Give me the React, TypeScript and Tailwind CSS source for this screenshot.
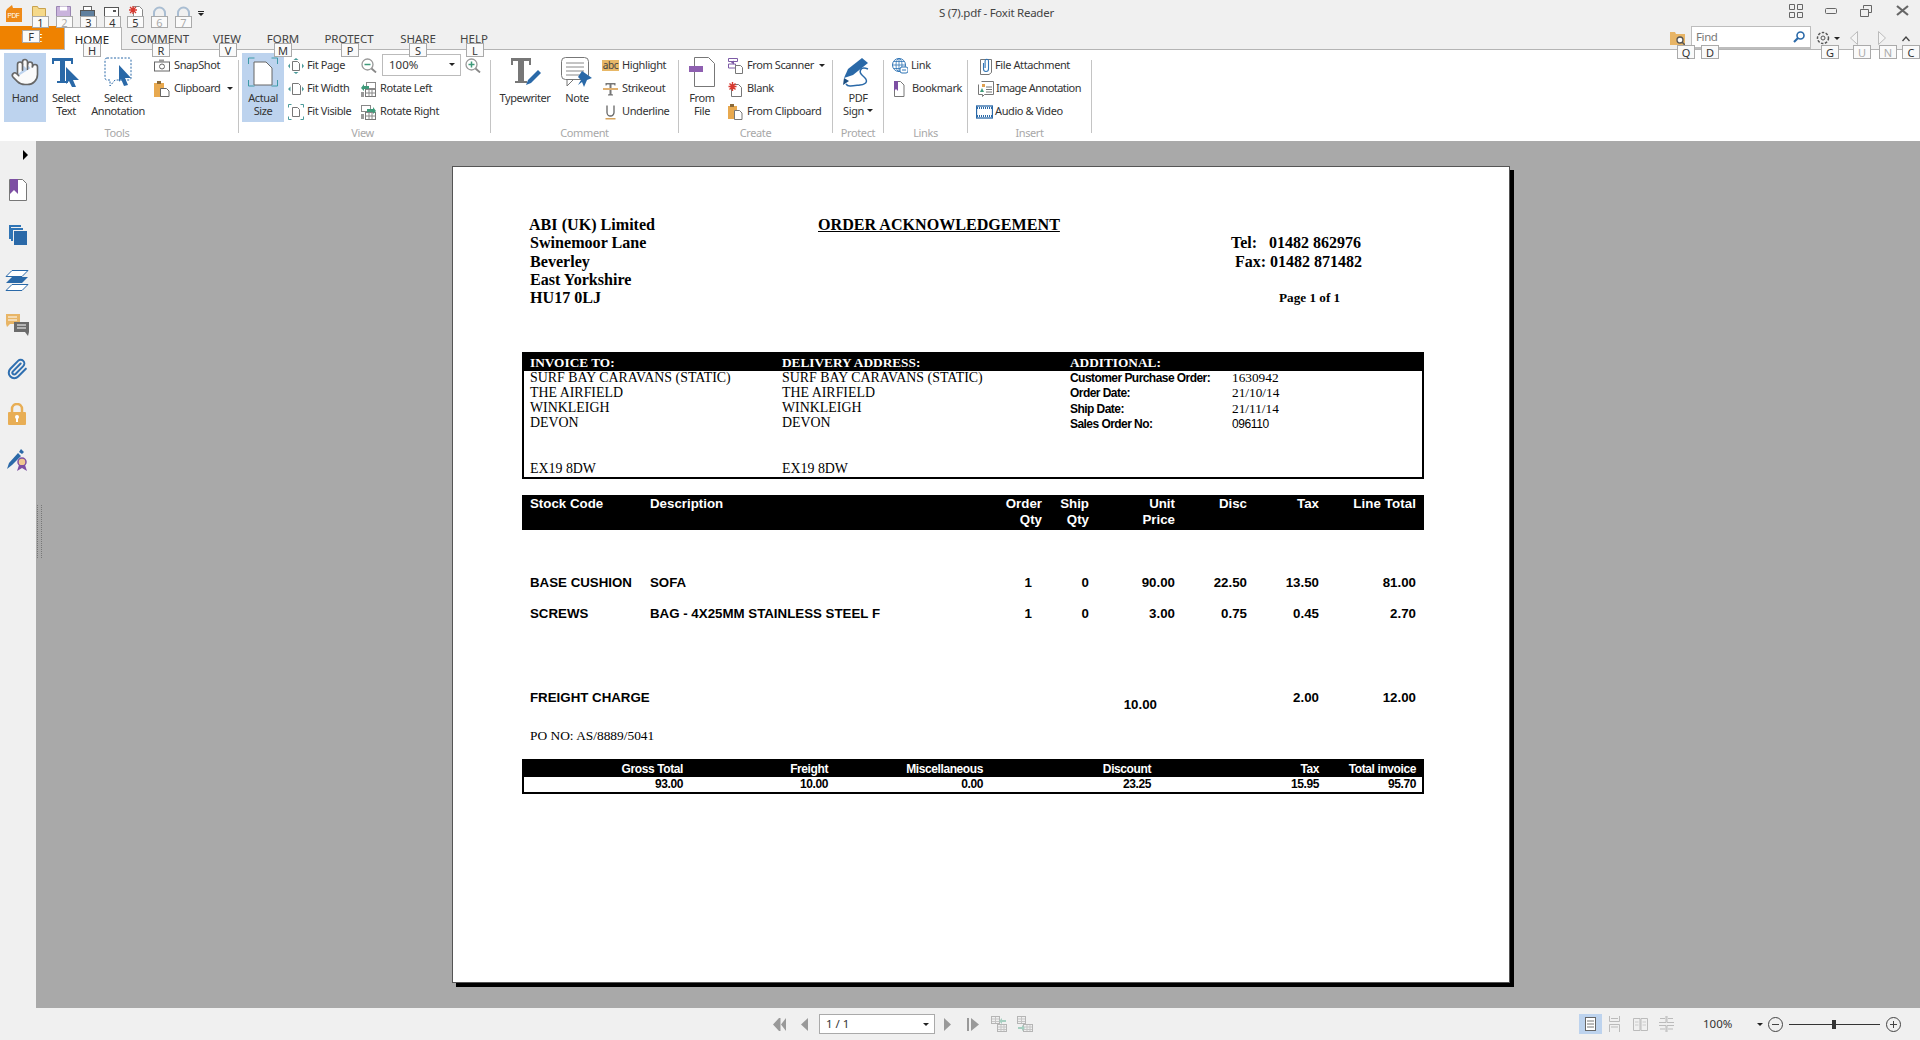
import React from "react";
import { Hand, Paperclip } from "lucide-react";

const BL = "#2a69a8";
const keys: [string, string, boolean][] = [
  ["1", "left-[32px] top-[16px] w-[17px] h-[12px]", false],
  ["2", "left-[56px] top-[16px] w-[17px] h-[12px]", true],
  ["3", "left-[80px] top-[16px] w-[17px] h-[12px]", false],
  ["4", "left-[104px] top-[16px] w-[17px] h-[12px]", false],
  ["5", "left-[127px] top-[16px] w-[17px] h-[12px]", false],
  ["6", "left-[151px] top-[16px] w-[17px] h-[12px]", true],
  ["7", "left-[175px] top-[16px] w-[17px] h-[12px]", true],
  ["F", "left-[22px] top-[30px] w-[18px] h-[13px]", false],
  ["H", "left-[83px] top-[43px] w-[18px] h-[14px]", false],
  ["R", "left-[152px] top-[43px] w-[18px] h-[14px]", false],
  ["V", "left-[219px] top-[43px] w-[18px] h-[14px]", false],
  ["M", "left-[274px] top-[43px] w-[18px] h-[14px]", false],
  ["P", "left-[341px] top-[43px] w-[18px] h-[14px]", false],
  ["S", "left-[409px] top-[43px] w-[18px] h-[14px]", false],
  ["L", "left-[466px] top-[43px] w-[18px] h-[14px]", false],
  ["Q", "left-[1677px] top-[45px] w-[18px] h-[14px]", false],
  ["D", "left-[1701px] top-[45px] w-[18px] h-[14px]", false],
  ["G", "left-[1821px] top-[45px] w-[18px] h-[14px]", false],
  ["U", "left-[1853px] top-[45px] w-[18px] h-[14px]", true],
  ["N", "left-[1879px] top-[45px] w-[18px] h-[14px]", true],
  ["C", "left-[1902px] top-[45px] w-[18px] h-[14px]", false],
];

function S({ w, h, children, className = "" }: { w: number; h: number; children: React.ReactNode; className?: string }) {
  return (
    <svg width={w} height={h} viewBox={`0 0 ${w} ${h}`} className={"shrink-0 " + className}>
      {children}
    </svg>
  );
}

const Caret = ({ className = "" }: { className?: string }) => (
  <span className={"inline-block w-0 h-0 border-x-[3px] border-x-transparent border-t-[3px] border-t-[#222] " + className} />
);

const TableIcon = ({ className = "", flip = false }: { className?: string; flip?: boolean }) => (
  <S w={16} h={16} className={className}>
    <rect x=".5" y=".5" width="8" height="7" fill="#f0f0f0" stroke="#b5b5b5" />
    <path d="M1 3h7M1 5.500h7M4.500 1v6" stroke="#c5c5c5" />
    <rect x="6.500" y="8.500" width="9" height="7" fill="#f0f0f0" stroke="#b5b5b5" />
    <path d="M7 11h8M7 13.500h8M10 9v6M13 9v6" stroke="#c5c5c5" />
    <path d={flip ? "M1 11h4v-2l3 3-3 3v-2h-4z" : "M15 4h-4v-2l-3 3 3 3v-2h4z"} fill="#a5cfc0" />
  </S>
);

const icons: Record<string, React.ReactNode> = {
  snapshot: (
    <S w={16} h={13}>
      <rect x=".5" y="3" width="15" height="9" fill="#fff" stroke="#666" />
      <rect x="5" y=".5" width="5" height="2.500" fill="#999" />
      <circle cx="8" cy="7.500" r="2.500" fill="none" stroke="#666" />
    </S>
  ),
  clipboard: (
    <S w={16} h={16}>
      <rect x="0" y="2" width="10" height="14" fill="#e8a94f" />
      <rect x="3" y="0" width="4" height="3" fill="#8a6a3a" />
      <path d="M6.500 7.500h6l2.500 2.500v5.500h-8.500z" fill="#fff" stroke="#666" />
    </S>
  ),
  fitpage: (
    <S w={16} h={16}>
      <path d="M4.500 3.500h5l2 2v7h-7z" fill="#fff" stroke="#777" />
      <path d="M8 0l2.500 2h-5zM8 16l2.500-2h-5zM0 8l2-2.500v5zM16 8l-2-2.500v5z" fill="#4a9a9a" />
    </S>
  ),
  fitwidth: (
    <S w={16} h={16}>
      <path d="M4.500 2.500h6l2 2v9h-8z" fill="#fff" stroke="#777" />
      <path d="M0 8l2.500-2.500v5zM16 8l-2-2.500v5z" fill="#4a9a9a" />
    </S>
  ),
  fitvisible: (
    <S w={16} h={16}>
      <path d="M4.500 3.500h5l2 2v7h-7z" fill="#fff" stroke="#777" />
      <path d="M.5 3.500v-3h3M12.500.5h3v3M.5 12.500v3h3M12.500 15.500h3v-3" fill="none" stroke="#4a9a9a" />
    </S>
  ),
  rotl: (
    <S w={15} h={16}>
      <rect x="5.500" y="1.500" width="9" height="6" fill="#fff" stroke="#888" />
      <rect x="4.500" y="8.500" width="10" height="7" fill="#fff" stroke="#777" />
      <path d="M5 8.500h9.500M8 8.500v7M11 8.500v7M4.500 12h10" stroke="#888" fill="none" />
      <path d="M0 7l3-4v2h5v3h-5v2z" fill="#3f9a7a" />
      <rect x="0" y="11" width="3" height="5" fill="#999" />
    </S>
  ),
  rotr: (
    <S w={15} h={16}>
      <rect x=".5" y="1.500" width="9" height="6" fill="#fff" stroke="#888" />
      <rect x="4.500" y="8.500" width="10" height="7" fill="#fff" stroke="#777" />
      <path d="M5 8.500h9.500M8 8.500v7M11 8.500v7M4.500 12h10" stroke="#888" fill="none" />
      <path d="M15 7l-3-4v2h-6v3h6v2z" fill="#3f9a7a" />
      <rect x="0" y="10" width="3" height="5" fill="#999" />
    </S>
  ),
  strike: (
    <S w={17} h={14}>
      <path d="M3.500 1h10v2.500h-1l-.5-1h-2.500v9.500l1.500.5v1h-5v-1l1.500-.5v-9.500h-2.500l-.5 1h-1z" fill="#777" />
      <rect x="1" y="6" width="15" height="2" fill="#e0b070" />
    </S>
  ),
  underline: (
    <S w={17} h={16}>
      <path d="M5 1.500v7a3.500 3.500 0 0 0 7 0v-7" stroke="#666" strokeWidth="1.300" fill="none" />
      <rect x="3.500" y="14" width="10" height="1.500" fill="#d7a45c" />
    </S>
  ),
  scanner: (
    <S w={15} h={16}>
      <path d="M.5 .5h9v3h-9zM.5 6h7v4h-7z" fill="#fff" stroke="#7d5ba6" />
      <path d="M3 4.500l3-2v4z" fill="#7d5ba6" />
      <path d="M7.500 7.500h5l2 2v6h-7z" fill="#fff" stroke="#777" />
    </S>
  ),
  blank: (
    <S w={15} h={16}>
      <path d="M3.500 3.500h7l3 3v9h-10z" fill="#fff" stroke="#777" />
      <path d="M4.500 1v9M.5 5.500h8M1.500 2.500l6 6M7.500 2.500l-6 6" stroke="#d9392f" strokeWidth="1.400" />
    </S>
  ),
  fromclip: (
    <S w={15} h={16}>
      <rect x="0" y="2" width="9" height="13" fill="#e8a94f" />
      <rect x="2" y="0" width="4" height="3" fill="#8a6a3a" />
      <path d="M6.500 6.500h5l2.500 2.500v6.500h-7.500z" fill="#fff" stroke="#777" />
    </S>
  ),
  link: (
    <S w={16} h={16}>
      <circle cx="7" cy="7" r="6.500" fill="#fff" stroke="#2f74b5" />
      <path d="M.5 7h13M7 .5v13M2 3.500h10M2 10.500h10" stroke="#2f74b5" fill="none" strokeWidth=".8" />
      <ellipse cx="7" cy="7" rx="3" ry="6.500" fill="none" stroke="#2f74b5" strokeWidth=".8" />
      <rect x="8" y="9" width="8" height="6" rx="2" fill="#fff" stroke="#2f74b5" />
      <path d="M10 12h4" stroke="#2f74b5" />
    </S>
  ),
  bookmark: (
    <S w={12} h={16}>
      <path d="M1.500 .5h6l3.500 3.500v11.500h-9.500z" fill="#fff" stroke="#777" />
      <path d="M1 0h4v10l-2-2-2 2z" fill="#7d4fa3" />
    </S>
  ),
  attach: (
    <S w={14} h={18}>
      <path d="M1.500 2.500h11v13l-2.500 2h-8.500z" fill="#fff" stroke="#777" />
      <path d="M4.500 6v6a2.500 2.500 0 0 0 5 0v-8a1.700 1.700 0 0 0-3.400 0v7" fill="none" stroke="#2f74b5" strokeWidth="1.100" />
    </S>
  ),
  image: (
    <S w={16} h={16}>
      <path d="M.5 3.500v10h4v2l2-2h9v-13h-12" fill="#fff" stroke="#777" />
      <path d="M2 11l2-4 2 4z" fill="#3f9a7a" />
      <path d="M8 6h6M8 8.500h6M8 11h6" stroke="#777" />
      <rect x="4" y="3" width="3" height="3" fill="#e0a050" />
    </S>
  ),
  video: (
    <S w={17} h={14}>
      <rect x=".5" y="1" width="16" height="12" fill="#fff" stroke="#2a69a8" strokeWidth="1.300" />
      <path d="M1 3h15M1 11h15" stroke="#2a69a8" strokeWidth="2" strokeDasharray="1 1" />
    </S>
  ),
};

function Row({ icon, text, gap, caret }: { icon: React.ReactNode; text: string; gap: string; caret?: string }) {
  return (
    <div className={"h-[23px] flex items-center whitespace-nowrap " + gap}>
      {icon}
      <span>{text}</span>
      {caret && <Caret className={caret} />}
    </div>
  );
}

function Big({ w, icon, l1, l2, active, ml = "" }: { w: string; icon: React.ReactNode; l1: React.ReactNode; l2?: React.ReactNode; active?: boolean; ml?: string }) {
  return (
    <div className={`${w} ${ml} h-[69px] mt-[3px] shrink-0 flex flex-col items-center ${active ? "bg-[#bdd3ee]" : ""}`}>
      <div className="h-[38px] pt-[4px] flex justify-center">{icon}</div>
      <div className="leading-[13px] text-center whitespace-nowrap">{l1}</div>
      {l2 && <div className="leading-[13px] text-center whitespace-nowrap">{l2}</div>}
    </div>
  );
}

function Group({ w, label, children, labelClass = "" }: { w: string; label: string; children: React.ReactNode; labelClass?: string }) {
  return (
    <div className={`${w} shrink-0 flex flex-col`}>
      <div className="h-[76px] flex">{children}</div>
      <div className={"h-[14px] leading-[14px] text-center text-[#a8a8a8] " + labelClass}>{label}</div>
    </div>
  );
}

const Sep = () => <div className="w-px h-[73px] mt-[10px] bg-[#c4c4c4] shrink-0" />;

const Col = ({ className, children }: { className: string; children: React.ReactNode }) => (
  <div className={"pt-[4px] shrink-0 " + className}>{children}</div>
);

function TopBar() {
  return (
    <div className="h-[50px] bg-[#f0f0f0] flex flex-col shrink-0">
      <div className="h-[26px] flex items-start">
        <svg width="16" height="17" viewBox="0 0 16 17" className="ml-[6px] mt-[5px] shrink-0">
          <path d="M1 4l5-4 1 3h9v14h-16v-11z" fill="#ef8a17" />
          <text x="1.500" y="13" fontSize="6.500" fill="#fff" fontFamily="Liberation Sans">PDF</text>
        </svg>
        <div className="flex ml-[10px] mt-[6px] gap-[9px] w-[171px]">
          <S w={15} h={11}><path d="M.5 10.500v-10h5l1 2h7v8z" fill="#f5d98a" stroke="#c9a24e" /></S>
          <S w={15} h={11}><path d="M.5.5h14v10h-14z" fill="#c9b3dc" stroke="#9a86b3" /><rect x="4" y=".5" width="7" height="4" fill="#fff" /></S>
          <S w={15} h={11}><rect x="3.500" y=".5" width="8" height="4" fill="#fff" stroke="#666" /><rect x=".5" y="4.500" width="14" height="6" fill="#60809f" stroke="#555" /></S>
          <S w={15} h={11}><rect x=".5" y="1.500" width="14" height="9" fill="#fff" stroke="#555" /><rect x="9" y="4" width="3" height="2" fill="#555" /></S>
          <S w={15} h={11}><path d="M5.500.5h6l3 3v7h-9z" fill="#fff" stroke="#888" /><path d="M5 0v8M1 4h8M2 1l6 6M8 1l-6 6" stroke="#d9392f" strokeWidth="1.300" /></S>
          <S w={15} h={11}><path d="M2 11v-4a5.500 5.500 0 0 1 11 0v4" fill="none" stroke="#a9bdd2" strokeWidth="2" /></S>
          <S w={15} h={11}><path d="M2 11v-4a5.500 5.500 0 0 1 11 0v4" fill="none" stroke="#a9bdd2" strokeWidth="2" /></S>
        </div>
        <svg width="7" height="6" viewBox="0 0 7 6" className="mt-[11px] -ml-[5px] shrink-0"><path d="M0 0h6v1h-6zM0 2h6l-3 3z" fill="#222" /></svg>
        <span className="ml-[734px] mt-[5px] leading-[16px] text-[11.5px] tracking-[-0.250px] text-[#444] whitespace-nowrap">S (7).pdf - Foxit Reader</span>
        <div className="ml-auto flex items-start">
          <S w={14} h={14} className="mt-[4px]"><path d="M.5.5h5v5h-5zM8.500.5h5v5h-5zM.5 8.500h5v5h-5zM8.500 8.500h5v5h-5z" fill="none" stroke="#666" /></S>
          <S w={12} h={6} className="mt-[8px] ml-[22px]"><rect x=".5" y=".5" width="11" height="5" rx="1" fill="none" stroke="#666" /></S>
          <S w={12} h={12} className="mt-[5px] ml-[23px]"><path d="M3.500 3.500v-3h8v7h-3M.5 4.500h8v7h-8z" fill="none" stroke="#666" /></S>
          <S w={13} h={11} className="mt-[5px] ml-[24px] mr-[11px]"><path d="M1 1l11 9M12 1l-11 9" stroke="#666" strokeWidth="2.200" /></S>
        </div>
      </div>
      <div className="h-[24px] flex items-start border-b border-[#b4b4b4] relative">
        <div className="w-[64px] h-[23px] bg-[#ef8200] text-white text-center leading-[23px] tracking-normal">FILE</div>
        <div className="w-[58px] h-[23px] -mb-px mt-[1px] bg-white border-x border-t border-[#b4b4b4] text-center leading-[24px] pr-[2px] text-[#222] text-[11.5px] tracking-normal">HOME</div>
        <div className="flex text-[11.5px] tracking-normal text-[#444] leading-[26px] text-center">
          <div className="w-[76px]">COMMENT</div>
          <div className="w-[58px]">VIEW</div>
          <div className="w-[54px]">FORM</div>
          <div className="w-[78px]">PROTECT</div>
          <div className="w-[60px]">SHARE</div>
          <div className="w-[52px]">HELP</div>
        </div>
        <div className="ml-auto flex items-start">
          <S w={15} h={14} className="mt-[5px]"><path d="M0 14v-13h5l1 2h9v11z" fill="#e8b566" /><circle cx="10" cy="9" r="3" fill="#fff" stroke="#555" strokeWidth="1.300" /><path d="M12 11l3 3" stroke="#555" strokeWidth="1.500" /></S>
          <div className="ml-[6px] w-[120px] h-[23px] bg-white border border-b-2 border-[#bdbdbd] flex items-center pl-[4px] text-[#777] text-[11.500px] justify-between pr-[5px]">
            <span>Find</span>
            <S w={12} h={12}><circle cx="7.500" cy="4.500" r="3.500" fill="none" stroke={BL} strokeWidth="1.600" /><path d="M5 7l-4 4" stroke={BL} strokeWidth="2.200" /></S>
          </div>
          <S w={14} h={14} className="mt-[5px] ml-[5px]"><circle cx="7" cy="7" r="2" fill="none" stroke="#555" /><circle cx="7" cy="7" r="5.500" fill="none" stroke="#555" strokeDasharray="2.500 1.500" strokeWidth="1.500" /></S>
          <Caret className="mt-[11px] ml-[4px]" />
          <S w={8} h={14} className="mt-[5px] ml-[10px]"><path d="M7.500.5v13l-7-6.500z" fill="#f5f5f5" stroke="#bbb" /></S>
          <S w={8} h={14} className="mt-[5px] ml-[20px]"><path d="M.5.5v13l7-6.500z" fill="#f5f5f5" stroke="#bbb" /></S>
          <S w={8} h={6} className="mt-[10px] ml-[16px] mr-[10px]"><path d="M.5 5l3.500-4 3.500 4" fill="none" stroke="#444" strokeWidth="1.300" /></S>
        </div>
      </div>
    </div>
  );
}

function Ribbon() {
  return (
    <div className="h-[91px] bg-white flex shrink-0">
      <Group w="w-[238px]" label="Tools" labelClass="pr-[4px]">
        <Big w="w-[42px]" ml="ml-[4px]" active icon={<Hand size={30} strokeWidth={1.300} color="#666" fill="#fafafa" />} l1="Hand" />
        <Big w="w-[40px]" icon={<S w={30} h={30}>
          <rect x="1" y="1" width="21" height="3" fill={BL} /><rect x="1" y="1" width="2" height="6" fill={BL} /><rect x="20" y="1" width="2" height="6" fill={BL} /><rect x="9" y="1" width="5" height="24" fill={BL} /><rect x="6" y="24" width="11" height="2" fill={BL} />
          <path d="M15 10l13 13h-6l3 7-4 0-3-6-3 3z" fill={BL} />
        </S>} l1="Select" l2="Text" />
        <Big w="w-[52px]" ml="ml-[6px]" icon={<S w={28} h={30}>
          <path d="M3 1h22a2 2 0 0 1 2 2v18a2 2 0 0 1-2 2h-14l-5 6v-6h-3a2 2 0 0 1-2-2v-18a2 2 0 0 1 2-2z" fill="none" stroke={BL} strokeDasharray="2 1.500" />
          <path d="M15 8l12 13h-6l3 7-4 1-3-7-2 3z" fill={BL} />
        </S>} l1="Select" l2="Annotation" />
        <Col className="ml-[10px]">
          <Row gap="gap-[4px]" icon={icons.snapshot} text="SnapShot" />
          <Row gap="gap-[4px]" icon={icons.clipboard} text="Clipboard" caret="ml-[3px]" />
        </Col>
      </Group>
      <Sep />
      <Group w="w-[251px]" label="View" labelClass="pr-[4px]">
        <Big w="w-[42px]" ml="ml-[3px]" active icon={<S w={30} h={30}>
          <path d="M6 5h12l6 6v17h-18z" fill="#fff" stroke="#666" />
          <path d="M.5 7v-6h6M23.500 1h6v6M.5 23v6h6M29.500 23v6h-6" fill="none" stroke="#3f9aa8" />
        </S>} l1="Actual" l2="Size" />
        <Col className="ml-[4px] w-[73px]">
          <Row gap="gap-[3px]" icon={icons.fitpage} text="Fit Page" />
          <Row gap="gap-[3px]" icon={icons.fitwidth} text="Fit Width" />
          <Row gap="gap-[3px]" icon={icons.fitvisible} text="Fit Visible" />
        </Col>
        <Col className="w-[122px]">
          <div className="h-[23px] flex items-center">
            <S w={16} h={15}><circle cx="6.500" cy="6.500" r="5.500" fill="#fff" stroke="#999" strokeWidth="1.300" /><path d="M3.500 6.500h6" stroke="#3f9a7a" strokeWidth="1.500" /><path d="M10.500 10.500l4.500 4" stroke="#888" strokeWidth="1.800" /></S>
            <div className="ml-[5px] w-[79px] h-[22px] -mt-[2px] border border-[#bbb] flex items-center justify-between pl-[6px] pr-[5px] text-[11.5px] tracking-normal">
              <span>100%</span><Caret />
            </div>
            <S w={16} h={15} className="ml-[4px]"><circle cx="6.500" cy="6.500" r="5.500" fill="#fff" stroke="#999" strokeWidth="1.300" /><path d="M3.500 6.500h6M6.500 3.500v6" stroke="#3f9a7a" strokeWidth="1.500" /><path d="M10.500 10.500l4.500 4" stroke="#888" strokeWidth="1.800" /></S>
          </div>
          <Row gap="gap-[4px]" icon={icons.rotl} text="Rotate Left" />
          <Row gap="gap-[4px]" icon={icons.rotr} text="Rotate Right" />
        </Col>
      </Group>
      <Sep />
      <Group w="w-[187px]" label="Comment">
        <Big w="w-[52px]" ml="ml-[8px]" icon={<S w={32} h={30}>
          <rect x="2" y="1" width="20" height="3" fill="#777" /><rect x="2" y="1" width="2" height="7" fill="#777" /><rect x="20" y="1" width="2" height="7" fill="#777" /><rect x="9" y="1" width="6" height="24" fill="#777" /><rect x="6" y="24" width="12" height="2" fill="#777" />
          <path d="M17 28l2-5 10-10 3 3-10 10z" fill={BL} />
        </S>} l1="Typewriter" />
        <Big w="w-[44px]" ml="ml-[4px]" icon={<S w={32} h={30}>
          <rect x=".5" y=".5" width="27" height="22" rx="4" fill="#fff" stroke="#777" />
          <path d="M6 23v6l6-6" fill="#fff" stroke="#777" />
          <path d="M5 6h18M5 10h18M5 14h18M5 18h14" stroke="#888" />
          <path d="M21 14l10 7-5 2-3 7-2-5-4 3 3-5-3-3z" fill={BL} />
        </S>} l1="Note" />
        <Col className="ml-[3px]">
          <div className="h-[23px] flex items-center gap-[3px]">
            <span className="w-[17px] h-[11px] bg-[#e8b867] text-[10px] leading-[10px] text-center text-[#444]">abc</span>
            <span>Highlight</span>
          </div>
          <Row gap="gap-[3px]" icon={icons.strike} text="Strikeout" />
          <Row gap="gap-[3px]" icon={icons.underline} text="Underline" />
        </Col>
      </Group>
      <Sep />
      <Group w="w-[153px]" label="Create">
        <Big w="w-[40px]" ml="ml-[3px]" icon={<S w={27} h={30}>
          <path d="M5.500 .5h14l6 6v23h-20z" fill="#fff" stroke="#777" />
          <rect x="0" y="9" width="14" height="6" fill="#8e5fb0" />
        </S>} l1="From" l2="File" />
        <Col className="ml-[6px]">
          <Row gap="gap-[4px]" icon={icons.scanner} text="From Scanner" caret="ml-[1px]" />
          <Row gap="gap-[4px]" icon={icons.blank} text="Blank" />
          <Row gap="gap-[4px]" icon={icons.fromclip} text="From Clipboard" />
        </Col>
      </Group>
      <Sep />
      <Group w="w-[50px]" label="Protect">
        <Big w="w-[50px]" icon={<S w={32} h={32}>
          <path d="M2 21l4-9 14-11 6 5-15 12z" fill={BL} />
          <path d="M2 21l-1 7 6-4" fill="#1d4f82" />
          <path d="M26 12c-8-3-10 3-5 7s5 8-3 9-12 2-14-1" fill="none" stroke={BL} strokeWidth="1.500" />
        </S>} l1="PDF" l2={<span className="inline-flex items-center gap-[3px]">Sign<Caret /></span>} />
      </Group>
      <Sep />
      <Group w="w-[83px]" label="Links">
        <Col className="ml-[8px]">
          <Row gap="gap-[3px]" icon={icons.link} text="Link" />
          <div className="h-[23px] flex items-center gap-[7px] pl-px whitespace-nowrap">{icons.bookmark}<span>Bookmark</span></div>
        </Col>
      </Group>
      <Sep />
      <Group w="w-[123px]" label="Insert">
        <Col className="ml-[8px]">
          <div className="h-[23px] flex items-center gap-[2px] pl-[3px] whitespace-nowrap">{icons.attach}<span>File Attachment</span></div>
          <div className="h-[23px] flex items-center gap-[2px] pl-[2px] whitespace-nowrap tracking-[-0.550px]">{icons.image}<span>Image Annotation</span></div>
          <Row gap="gap-[2px]" icon={icons.video} text="Audio & Video" />
        </Col>
      </Group>
      <Sep />
    </div>
  );
}

function Rail() {
  return (
    <div className="w-[36px] bg-[#f0f0f0] shrink-0 flex flex-col items-start">
      <div className="ml-[23px] mt-[9px] w-0 h-0 border-y-[5px] border-y-transparent border-l-[5px] border-l-black" />
      <S w={18} h={22} className="ml-[9px] mt-[19px]"><path d="M.5.5h13l4 4v17h-17z" fill="#fff" stroke="#777" /><path d="M1 0h8v15l-4-4-4 4z" fill="#7d4fa3" /></S>
      <S w={19} h={21} className="ml-[8px] mt-[23px]"><path d="M1 1h12v2h-10v12h-2zM3 4h12v2h-10v11h-2z" fill="#2f74b5" /><rect x="6" y="7" width="13" height="14" fill="#2a69a8" /></S>
      <S w={24} h={21} className="ml-[5px] mt-[25px]"><path d="M7 .5h16l-6 6h-16zM7 14.500h16l-6 6h-16z" fill="#fff" stroke={BL} /><path d="M7 7h16l-6 6h-16z" fill={BL} /></S>
      <S w={23} h={22} className="ml-[6px] mt-[23px]"><path d="M0 0h14v10h-10l-3 3-1-3z" fill="#e8b566" /><path d="M2 3h9M2 6h9" stroke="#fff" /><path d="M8 8h15v10l-1 4-3-4h-11z" fill="#6b6b6b" /><path d="M11 11h9M11 14h9" stroke="#fff" /></S>
      <Paperclip size={22} strokeWidth={2.200} color="#2f6fb0" className="ml-[6px] mt-[22px]" />
      <S w={18} h={22} className="ml-[8px] mt-[23px]"><path d="M4 10v-4a5 5 0 0 1 10 0v4" fill="none" stroke="#e8ae55" strokeWidth="2.500" /><rect x="0" y="9" width="18" height="13" rx="1" fill="#e8ae55" /><circle cx="9" cy="14" r="2" fill="#fff" /><rect x="8" y="14" width="2" height="5" fill="#fff" /></S>
      <S w={21} h={22} className="ml-[7px] mt-[24px]"><path d="M0 20l2-6 9-10 3 3-9 9zM12 3l2-3 3 3-2 2z" fill={BL} /><circle cx="15" cy="13" r="4" fill="#f0c890" stroke="#7d4fa3" strokeWidth="1.500" /><path d="M12 16l-2 6 5-3 5 3-2-6" fill="#7d4fa3" /></S>
    </div>
  );
}

const SERIF = "font-['Liberation_Serif',serif]";
const SANS = "font-['Liberation_Sans',sans-serif]";

function PdfPage() {
  const addr = ["SURF BAY CARAVANS (STATIC)", "THE AIRFIELD", "WINKLEIGH", "DEVON", "", "", "EX19 8DW"];
  const info: [string, string, string][] = [
    ["Customer Purchase Order:", "1630942", SERIF + " text-[13.300px] -mt-[1px]"],
    ["Order Date:", "21/10/14", SERIF + " text-[13.300px] -mt-[1px]"],
    ["Ship Date:", "21/11/14", SERIF + " text-[13.300px] -mt-[1px]"],
    ["Sales Order No:", "096110", SANS + " text-[12px] tracking-[-0.400px]"],
  ];
  const itemCols = "grid grid-cols-[120px_330px_62px_47px_86px_72px_72px_97px] pl-[8px]";
  const items = [
    ["BASE CUSHION", "SOFA", "1", "0", "90.00", "22.50", "13.50", "81.00"],
    ["SCREWS", "BAG - 4X25MM STAINLESS STEEL F", "1", "0", "3.00", "0.75", "0.45", "2.70"],
  ];
  const totalCols = "grid grid-cols-[159px_145px_155px_168px_168px_97px] h-[15px] leading-[15px]";
  return (
    <div className="w-[1058px] h-[817px] bg-white border border-[#555] shadow-[4px_4px_0_#000] text-black pl-[69px] pt-[49px] tracking-normal">
      <div className={`${SERIF} font-bold text-[16.100px] leading-[18.300px] flex w-[902px] pl-[8px] h-[92px]`}>
        <div className="w-[288px] shrink-0">
          <div className="-ml-px">ABI (UK) Limited</div>
          <div>Swinemoor Lane</div>
          <div>Beverley</div>
          <div>East Yorkshire</div>
          <div>HU17 0LJ</div>
        </div>
        <div className="w-[413px] shrink-0 underline">ORDER ACKNOWLEDGEMENT</div>
        <div className="whitespace-pre text-[16px]">
          <div>&nbsp;</div>
          <div>Tel:   01482 862976</div>
          <div className="ml-[4px]">Fax: 01482 871482</div>
          <div>&nbsp;</div>
          <div className="ml-[48px] text-[13.200px]">Page 1 of 1</div>
        </div>
      </div>
      <div className="mt-[44px] w-[902px] h-[127px] border-2 border-black">
        <div className={`${SERIF} font-bold text-[13.300px] h-[17px] leading-[18px] bg-black text-white grid grid-cols-[258px_288px_1fr]`}>
          <div className="pl-[6px]">INVOICE TO:</div>
          <div>DELIVERY ADDRESS:</div>
          <div>ADDITIONAL:</div>
        </div>
        <div className="grid grid-cols-[258px_288px_1fr] leading-[15.300px]">
          <div className={`${SERIF} text-[13.900px] pl-[6px] -mt-[1.500px]`}>
            {addr.map((a, i) => <div key={i} className="h-[15.300px] whitespace-nowrap">{a}</div>)}
          </div>
          <div className={`${SERIF} text-[13.900px] -mt-[1.500px]`}>
            {addr.map((a, i) => <div key={i} className="h-[15.300px] whitespace-nowrap">{a}</div>)}
          </div>
          <div className="grid grid-cols-[162px_1fr] content-start">
            {info.map(([k, v, c]) => (
              <React.Fragment key={k}>
                <div className={`${SANS} font-bold text-[12px] tracking-[-0.550px] h-[15.300px] whitespace-nowrap`}>{k}</div>
                <div className={`${c} h-[15.300px]`}>{v}</div>
              </React.Fragment>
            ))}
          </div>
        </div>
      </div>
      <div className={`${SANS} font-bold text-[13.300px] w-[902px]`}>
        <div className={`${itemCols} mt-[16px] h-[35px] bg-black text-white pt-[1px] leading-[16px]`}>
          <div>Stock Code</div>
          <div>Description</div>
          <div className="text-right">Order<br />Qty</div>
          <div className="text-right">Ship<br />Qty</div>
          <div className="text-right">Unit<br />Price</div>
          <div className="text-right">Disc</div>
          <div className="text-right">Tax</div>
          <div className="text-right whitespace-nowrap tracking-[0.100px]">Line Total</div>
        </div>
        <div className="pt-[45px] flex flex-col gap-[15px] leading-[16px]">
          {items.map((r) => (
            <div key={r[0]} className={itemCols}>
              {r.map((c, i) => (
                <div key={i} className={i === 2 ? "text-right pr-[10px]" : i > 1 ? "text-right" : "whitespace-nowrap"}>{c}</div>
              ))}
            </div>
          ))}
        </div>
        <div className={`${itemCols} mt-[68px] leading-[16px] h-[16px]`}>
          <div className="col-span-2 whitespace-nowrap">FREIGHT CHARGE</div>
          <div />
          <div />
          <div className="text-right pr-[18px] pt-[7px]">10.00</div>
          <div />
          <div className="text-right">2.00</div>
          <div className="text-right">12.00</div>
        </div>
      </div>
      <div className={`${SERIF} text-[13.400px] pl-[8px] mt-[22px] leading-[15px]`}>PO NO: AS/8889/5041</div>
      <div className={`${SANS} font-bold text-[12px] tracking-[-0.400px] mt-[16px] w-[902px] h-[35px] border-x-2 border-b-2 border-black`}>
        <div className={`${totalCols} !h-[18px] !leading-[20px] bg-black text-white text-right`}>
          <div>Gross Total</div><div>Freight</div><div>Miscellaneous</div><div>Discount</div><div>Tax</div><div>Total invoice</div>
        </div>
        <div className={`${totalCols} text-right`}>
          <div>93.00</div><div>10.00</div><div>0.00</div><div>23.25</div><div>15.95</div><div>95.70</div>
        </div>
      </div>
    </div>
  );
}

function Status() {
  return (
    <div className="h-[32px] bg-[#f0f0f0] shrink-0 flex items-center text-[#333] text-[11.5px] tracking-normal">
      <S w={14} h={13} className="ml-[773px]"><path d="M6 0v13l-6-6.500zM13 0v13l-5-6.500z" fill="#999" /><rect x="6" y="0" width="1.500" height="13" fill="#999" /></S>
      <S w={7} h={13} className="ml-[14px]"><path d="M7 0v13l-7-6.500z" fill="#999" /></S>
      <div className="ml-[11px] w-[116px] h-[20px] bg-white border border-[#aaa] flex items-center justify-between pl-[6px] pr-[5px]">
        <span>1 / 1</span><Caret />
      </div>
      <S w={7} h={13} className="ml-[9px]"><path d="M0 0v13l7-6.500z" fill="#999" /></S>
      <S w={12} h={13} className="ml-[16px]"><path d="M4 0v13l8-6.500z" fill="#999" /><rect x="0" y="0" width="2" height="13" fill="#999" /></S>
      <TableIcon className="ml-[12px]" />
      <TableIcon className="ml-[10px]" flip />
      <div className="ml-[546px] w-[23px] h-[20px] bg-[#bdd3ee] flex items-center justify-center">
        <S w={11} h={14}><rect x=".5" y=".5" width="10" height="13" fill="#fff" stroke="#666" /><path d="M2 4h7M2 7h7M2 10h7" stroke="#777" /></S>
      </div>
      <S w={11} h={16} className="ml-[7px]"><path d="M.5 0v5.500h10v-5.500M.5 16v-7.500h10v7.500M2 2.500h7M2 11h7" fill="none" stroke="#bbb" /></S>
      <S w={15} h={13} className="ml-[13px]"><path d="M.5.5h6.500v12h-6.500zM8 .5h6.500v12h-6.500z" fill="none" stroke="#bbb" /><path d="M2 4h3.500M2 7h3.500M9.500 4h3.500M9.500 7h3.500" stroke="#ccc" /></S>
      <S w={15} h={16} className="ml-[11px]"><path d="M7 0v6.500h-7M8 0v6.500h7M7 16v-6.500h-7M8 16v-6.500h7M1 2.500h5M9 2.500h5M1 13h5M9 13h5" fill="none" stroke="#bbb" /></S>
      <span className="ml-[29px]">100%</span>
      <Caret className="ml-[25px]" />
      <S w={15} h={15} className="ml-[5px]"><circle cx="7.500" cy="7.500" r="7" fill="none" stroke="#444" /><path d="M4 7.500h7" stroke="#444" /></S>
      <div className="ml-[6px] w-[91px] h-px bg-[#333] relative">
        <div className="absolute left-[43px] -top-[4px] w-[4px] h-[9px] bg-[#333]" />
      </div>
      <S w={15} h={15} className="ml-[6px]"><circle cx="7.500" cy="7.500" r="7" fill="none" stroke="#444" /><path d="M4 7.500h7M7.500 4v7" stroke="#444" /></S>
    </div>
  );
}

export default function App() {
  return (
    <div className="relative w-[1920px] h-[1040px] overflow-hidden flex flex-col bg-[#f0f0f0] font-['Noto_Sans',sans-serif] text-[11px] tracking-[-0.400px] text-[#333]">
      <TopBar />
      <Ribbon />
      <div className="h-[867px] flex shrink-0">
        <Rail />
        <div className="relative flex-1 bg-[#a9a9a9] pl-[416px] pt-[25px]">
          <div className="absolute left-[1px] top-[364px] w-[5px] h-[53px] border-x border-dotted border-[#777]" />
          <PdfPage />
        </div>
      </div>
      <Status />
      {keys.map(([k, cls, dim]) => (
        <div key={k} className={`absolute ${cls} bg-[#fafafa] border border-[#aaa] flex items-center justify-center text-[11px] leading-none tracking-normal ${dim ? "text-[#aaa]" : "text-[#333]"}`}>{k}</div>
      ))}
    </div>
  );
}
